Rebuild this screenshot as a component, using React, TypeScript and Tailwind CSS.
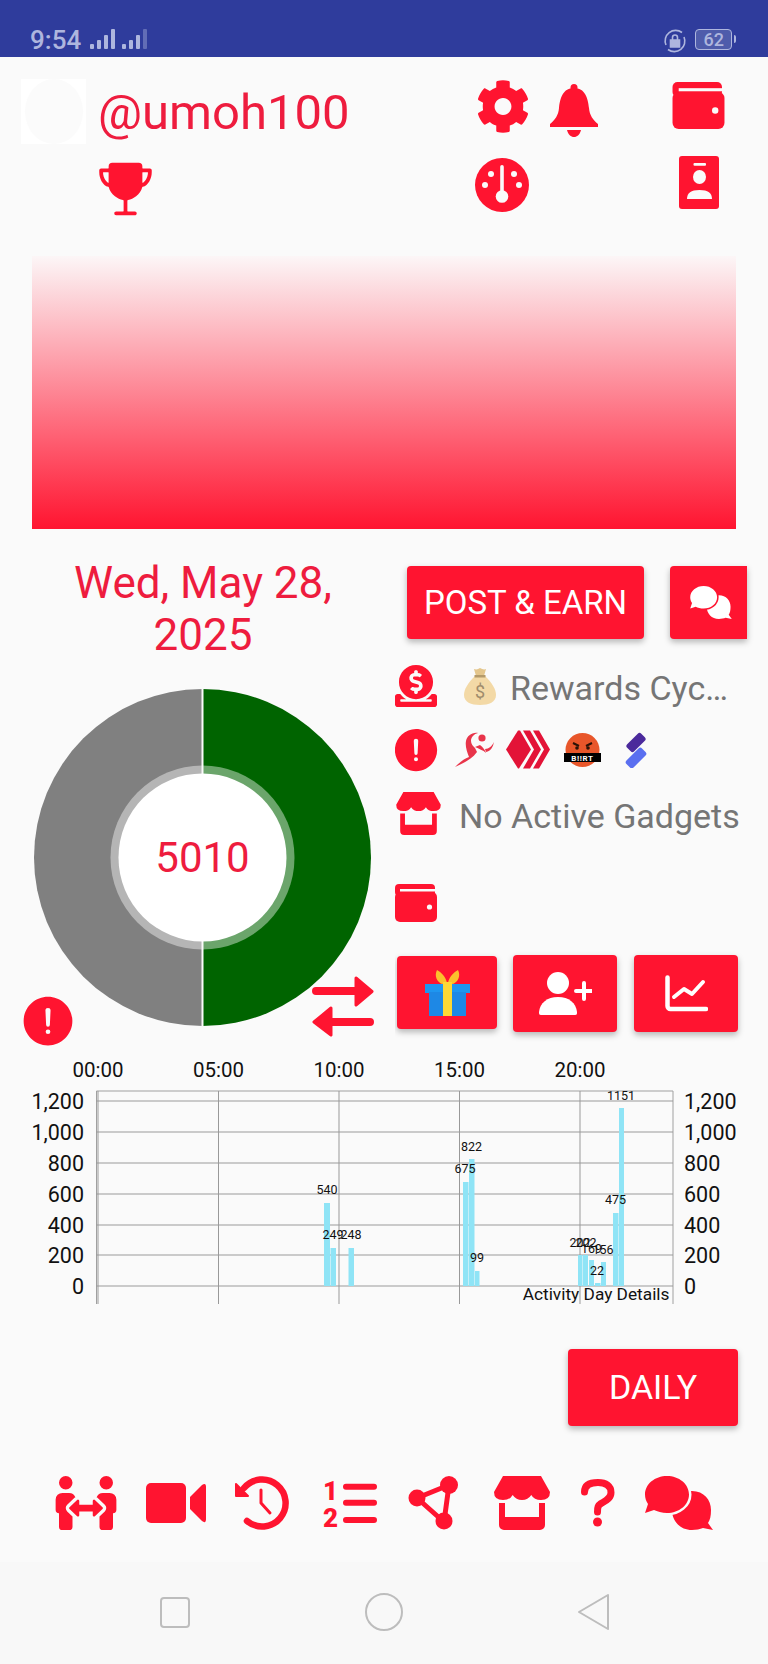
import React from 'react';
import { FaCog, FaDonate, FaPeopleArrows } from 'react-icons/fa';
import { IoAlertCircle, IoTrophy } from 'react-icons/io5';

const gridY = [
  { label: '1,200', y: 51 },
  { label: '1,000', y: 82 },
  { label: '800', y: 113 },
  { label: '600', y: 144 },
  { label: '400', y: 175 },
  { label: '200', y: 205 },
  { label: '0', y: 236 },
];

const gridX = [
  { label: '00:00', x: 98 },
  { label: '05:00', x: 218.5 },
  { label: '10:00', x: 339 },
  { label: '15:00', x: 459.5 },
  { label: '20:00', x: 580 },
];

const bars = [
  { x: 324, w: 6, top: 1203 },
  { x: 330.5, w: 5.5, top: 1248 },
  { x: 348.5, w: 5.5, top: 1248 },
  { x: 463, w: 5.5, top: 1182 },
  { x: 469, w: 5.5, top: 1159 },
  { x: 475, w: 4.5, top: 1271 },
  { x: 578, w: 4.5, top: 1255 },
  { x: 583, w: 5, top: 1255 },
  { x: 589, w: 5, top: 1260 },
  { x: 595, w: 5.5, top: 1283 },
  { x: 601, w: 5, top: 1262 },
  { x: 613, w: 5.5, top: 1213 },
  { x: 619, w: 5, top: 1108 },
];

const values = [
  { t: '540', x: 327, y: 1189 },
  { t: '249', x: 333, y: 1234 },
  { t: '248', x: 351, y: 1234 },
  { t: '675', x: 465, y: 1168 },
  { t: '822', x: 471.5, y: 1146 },
  { t: '99', x: 477, y: 1257 },
  { t: '202', x: 580, y: 1242 },
  { t: '202', x: 586, y: 1242 },
  { t: '169', x: 591.5, y: 1248 },
  { t: '22', x: 597, y: 1270 },
  { t: '156', x: 603, y: 1249 },
  { t: '475', x: 615.5, y: 1199 },
  { t: '1151', x: 621, y: 1095 },
];

const Bell = ({ className }: { className: string }) => (
  <svg className={className} viewBox="0 0 48 53" fill="currentColor">
    <circle cx="24" cy="3.5" r="3.5" />
    <path d="M24 4C13 4 10 14 9 24c-.5 7-4 12-9 16v3h48v-3c-5-4-8.5-9-9-16C38 14 35 4 24 4z" />
    <path d="M17 46h14c-1 4.5-4 7-7 7s-6-2.5-7-7z" />
  </svg>
);

const Wallet = ({ className }: { className: string }) => (
  <svg className={className} viewBox="0 0 42 38" fill="currentColor">
    <rect x="0" y="0" width="40" height="12" rx="4" />
    <rect x="0" y="8" width="42" height="30" rx="5" />
    <rect x="5" y="5" width="37" height="2.5" fill="#fafafa" />
    <circle cx="34.5" cy="23" r="2.6" fill="#fafafa" />
  </svg>
);

const Gauge = ({ className }: { className: string }) => (
  <svg className={className} viewBox="0 0 54 54">
    <circle cx="27" cy="27" r="27" fill="currentColor" />
    <g fill="#fafafa">
      <rect x="25.2" y="7" width="3.6" height="30" rx="1.8" />
      <circle cx="27" cy="38.5" r="6.3" />
      <circle cx="10" cy="27" r="3" />
      <circle cx="44" cy="27" r="3" />
      <circle cx="16" cy="16" r="3" />
      <circle cx="39" cy="16" r="3" />
    </g>
  </svg>
);

const IdCard = ({ className }: { className: string }) => (
  <svg className={className} viewBox="0 0 40 53">
    <rect x="0" y="0" width="40" height="53" rx="3" fill="currentColor" />
    <g fill="#fafafa">
      <rect x="14.5" y="7" width="12.5" height="2.8" rx="1" />
      <ellipse cx="20.5" cy="21" rx="6.5" ry="7" />
      <path d="M8 43c0-6 4-9 12.5-9S33 37 33 43z" />
    </g>
  </svg>
);

const Chats = ({ className, fill, gap }: { className: string; fill: string; gap: string }) => (
  <svg className={className} viewBox="0 0 68 54" fill={fill}>
    <path d="M47 15c12 0 19 9 19 19 0 6-1 10-3 13l5 7-10-2c-3 1-7 2-11 2-12 0-20-9-20-20s8-19 20-19z" />
    <path
      d="M22 0c12 0 22 8 22 18.5S34 37 22 37c-5 0-10-1.5-13-3l-9 3 3-9c-2-3-3-6-3-9.5C0 8 10 0 22 0z"
      stroke={gap}
      strokeWidth="5"
      paintOrder="stroke"
    />
  </svg>
);

const PersonAdd = ({ className }: { className: string }) => (
  <svg className={className} viewBox="0 0 53 43" fill="currentColor">
    <circle cx="19" cy="11" r="11" />
    <path d="M2 43c-2 0-2-1-2-3 1-9 8-15 19-15s18 6 19 15c0 2 0 3-2 3z" />
    <path d="M45 11v16M37 19h16" stroke="currentColor" strokeWidth="4" strokeLinecap="round" />
  </svg>
);

const ChartLine = ({ className }: { className: string }) => (
  <svg className={className} viewBox="0 0 43 37" fill="none" stroke="currentColor" strokeWidth="4.5" strokeLinecap="round" strokeLinejoin="round">
    <path d="M2.5 2.5V31a3 3 0 0 0 3 3H41" />
    <path d="M9 22l10-8 8 5 11-12" strokeWidth="4" />
  </svg>
);

const Store = ({ className }: { className: string }) => (
  <svg className={className} viewBox="0 0 56 54" fill="currentColor">
    <path d="M9 0h38l9 16q0 8-9 8-7 0-9.7-5-3.3 5-9.3 5t-9.3-5q-2.7 5-9.7 5-9 0-9-8z" />
    <path d="M5 27h6v14h34V27h6v22a5 5 0 0 1-5 5H10a5 5 0 0 1-5-5z" />
  </svg>
);

const Video = ({ className }: { className: string }) => (
  <svg className={className} viewBox="0 0 60 40" fill="currentColor">
    <rect x="0" y="0" width="40" height="40" rx="5" />
    <path d="M44 14 56 2q4-3 4 2v32q0 5-4 2L44 26z" />
  </svg>
);

const History = ({ className }: { className: string }) => (
  <svg className={className} viewBox="0 0 54 54" fill="none" stroke="currentColor" strokeLinecap="round" strokeLinejoin="round">
    <path d="M9 12A23.5 23.5 0 1 1 12 45" strokeWidth="6.5" />
    <path d="M1 8v12h12z" fill="currentColor" strokeWidth="2" />
    <path d="M26 14v13l9 10" strokeWidth="3" />
  </svg>
);

const NumberedList = ({ className }: { className: string }) => (
  <svg className={className} viewBox="0 0 54 47" fill="currentColor">
    <text x="7.5" y="20" textAnchor="middle" fontSize="26" fontWeight="900">1</text>
    <text x="7.5" y="47" textAnchor="middle" fontSize="26" fontWeight="900">2</text>
    <path d="M23 6.7h28M23 22.7h28M23 40h28" stroke="currentColor" strokeWidth="6" strokeLinecap="round" />
  </svg>
);

const ShareTriangle = ({ className }: { className: string }) => (
  <svg className={className} viewBox="0 0 51 54" fill="none" stroke="currentColor" strokeWidth="5" strokeLinejoin="round">
    <path d="M41 9 9 22l27 24z" />
    <circle cx="41" cy="9" r="9" fill="currentColor" stroke="none" />
    <circle cx="9" cy="22" r="8.5" fill="currentColor" stroke="none" />
    <circle cx="36" cy="45" r="8.5" fill="currentColor" stroke="none" />
  </svg>
);

const Question = ({ className }: { className: string }) => (
  <svg className={className} viewBox="0 0 34 48" fill="none" stroke="currentColor" strokeWidth="7" strokeLinecap="round">
    <path d="M3.5 13c0-7 5.5-9.5 13.5-9.5S30 7 30 13.5 24 22 20 24.5c-3 2-3.5 3.5-3.5 8.5" />
    <circle cx="16.5" cy="43" r="4.5" fill="currentColor" stroke="none" />
  </svg>
);

const SwapArrows = ({ className }: { className: string }) => (
  <svg className={className} viewBox="0 0 62 61" fill="currentColor" stroke="currentColor" strokeLinecap="round" strokeLinejoin="round">
    <path d="M4 15h42M58 46H18" strokeWidth="8" />
    <path d="M44 2 60 15.5 44 29zM19 32 2 46l17 13z" strokeWidth="3" />
  </svg>
);

const StatusBar = () => (
  <div className="flex h-[57px] shrink-0 items-start bg-[#2f3c9c] pl-[30px] pt-[26px] text-[#aeb6de]">
    <span className="text-[26px] font-medium leading-[29px]">9:54</span>
    <svg className="ml-[9px] mt-[3px] h-[21px] w-[58px]" viewBox="0 0 58 21" fill="currentColor">
      <rect x="0" y="15" width="4" height="5" rx="1" />
      <rect x="7" y="11" width="4" height="9" rx="1" />
      <rect x="14" y="6" width="4" height="14" rx="1" />
      <rect x="21" y="0" width="4" height="20" rx="1" />
      <rect x="32" y="15" width="4" height="5" rx="1" />
      <rect x="39" y="11" width="4" height="9" rx="1" />
      <rect x="46" y="6" width="4" height="14" rx="1" />
      <rect x="53" y="0" width="4" height="20" rx="1" opacity="0.4" />
    </svg>
    <svg className="ml-[515px] mt-[3px] h-[24px] w-[24px]" viewBox="0 0 24 24" fill="none" stroke="currentColor" strokeWidth="1.6">
      <path d="M3 16A10.5 10.5 0 0 1 19 3.5M21 8A10.5 10.5 0 0 1 5 20.5" />
      <path d="M7.5 11h9v7h-9z" fill="currentColor" />
      <path d="M9.5 11V8.5a2.5 2.5 0 0 1 5 0V11" />
    </svg>
    <div className="ml-[8px] mt-[3px] flex h-[21px] w-[37px] items-center justify-center rounded-[4px] border-[1.5px] border-[#aeb6de] bg-[#4f5cab] text-[18px] font-medium leading-none">
      62
    </div>
    <div className="ml-[2px] mt-[9px] h-[8px] w-[2px] rounded-r-sm bg-[#aeb6de]" />
  </div>
);

const Header = () => (
  <div className="grid h-[199px] shrink-0 grid-cols-[79px_378px_72px_122px_60px] grid-rows-[77px_60px] pl-[21px] pt-[22px] text-[#ff1430]">
    <div className="flex h-[65px] w-[65px] items-center justify-center bg-white">
      <div className="h-[65px] w-[58px] rounded-[50%] bg-[#fbfbfb]" />
    </div>
    <div className="-ml-[2px] mt-[6px] text-[49px] leading-[56px] text-[#ee1c3e]">@umoh100</div>
    <FaCog className="-ml-[2px] h-[55px] w-[54px]" />
    <Bell className="mt-[5px] h-[53px] w-[48px]" />
    <Wallet className="mt-[3px] h-[47px] w-[53px]" />
    <div />
    <IoTrophy className="-ml-[8px] mt-[3px] h-[60px] w-[67px]" />
    <Gauge className="-ml-[3px] mt-[2px] h-[54px] w-[54px]" />
    <div />
    <IdCard className="ml-[7px] h-[53px] w-[40px]" />
  </div>
);

const Donut = () => (
  <div className="relative ml-[34px] mt-[28px] h-[337px] w-[337px]">
    <svg className="h-[337px] w-[337px]" viewBox="0 0 337 337">
      <path d="M168.5 0a168.5 168.5 0 0 1 0 337z" fill="#006400" />
      <path d="M168.5 0a168.5 168.5 0 0 0 0 337z" fill="#808080" />
      <circle cx="168.5" cy="168.5" r="92" fill="#ffffff" fillOpacity="0.42" />
      <rect x="167.5" y="0" width="2" height="337" fill="#fafafa" />
      <circle cx="168.5" cy="168.5" r="84" fill="#ffffff" />
    </svg>
    <div className="absolute inset-0 flex items-center justify-center text-[42px] text-[#ee1c3e]">5010</div>
  </div>
);

const MoneyBag = () => (
  <svg className="h-[38px] w-[32px]" viewBox="0 0 32 38">
    <path d="M11 9C4 16 0 22 0 28c0 7 7 10 16 10s16-3 16-10c0-6-4-12-11-19z" fill="#f3d9a6" />
    <path d="M10 2c3 1 4 0 6-1 2 1 4 2 6 1l-2 7h-8z" fill="#e4c68c" />
    <rect x="10.5" y="8" width="11" height="2.5" fill="#b49a6a" />
    <text x="16" y="31" textAnchor="middle" fontSize="18" fill="#a08c6c">$</text>
  </svg>
);

const Runner = () => (
  <svg className="h-[35px] w-[41px]" viewBox="0 0 41 35" fill="#e8344a">
    <circle cx="28" cy="6" r="3.6" />
    <path d="M1 35c5-5 9-8 14-10-2-5-4-11-3-16 1-5 6-9 12-8-4 1-7 4-7 8 0 3 2 5 4 7l2 4c-5 7-13 11-22 15z" />
    <path d="M21 15c4 2 8 3 11 6-1-3-3-6-6-8z" />
    <path d="M31 17c4 0 7-3 9-7-1 5-3 9-8 10z" />
  </svg>
);

const Hive = () => (
  <svg className="h-[39px] w-[44px]" viewBox="0 0 44 38" fill="#e31337">
    <polygon points="0,19 12,0 14,0 25,19 13,38 12,38" />
    <polygon points="17,0 24,0 35,19 24,38 17,38 28,19" />
    <polygon points="27,0 33,0 44,19 33,38 27,38 38,19" />
  </svg>
);

const Blurt = () => (
  <svg className="h-[34px] w-[37px]" viewBox="0 0 37 34">
    <circle cx="18.5" cy="17" r="17" fill="#e8562a" />
    <path d="M9 10l6 3M28 10l-6 3" stroke="#2b1206" strokeWidth="2" />
    <circle cx="13" cy="15" r="1.8" fill="#2b1206" />
    <circle cx="24" cy="15" r="1.8" fill="#2b1206" />
    <rect x="0" y="20" width="37" height="9" fill="#000000" />
    <text x="18.5" y="27.5" textAnchor="middle" fontSize="8" fontWeight="700" letterSpacing="0.6" fill="#ffffff">B!!RT</text>
  </svg>
);

const Splinter = () => (
  <svg className="h-[36px] w-[22px]" viewBox="0 0 22 36">
    <rect x="1" y="5.5" width="20" height="10" rx="2.5" transform="rotate(-45 11 10.5)" fill="#4b2a9c" />
    <rect x="0" y="21" width="22" height="10" rx="2.5" transform="rotate(-45 11 26)" fill="#5a6ff0" />
  </svg>
);

const Gift = () => (
  <svg className="h-[46px] w-[45px]" viewBox="0 0 45 46">
    <path d="M17 14C12 12 9 6 12 0c4 2 9 7 10 13zM28 14c5-2 8-8 5-14-4 2-9 7-10 13z" fill="#fbc02d" />
    <rect x="0" y="14" width="45" height="9" fill="#1e96f0" />
    <rect x="4" y="22" width="37" height="24" fill="#1e88e5" />
    <rect x="18" y="12" width="9" height="34" fill="#fdd835" />
  </svg>
);

const RedButton = ({ className, children }: { className: string; children: React.ReactNode }) => (
  <div className={`flex items-center justify-center rounded-[4px] bg-[#ff1430] text-white shadow-[0_3px_6px_rgba(0,0,0,0.28)] ${className}`}>
    {children}
  </div>
);

const Actions = () => (
  <div className="relative flex h-[521px] shrink-0">
    <div className="w-[395px] shrink-0">
      <div className="mt-[28px] w-[406px] text-center text-[44px] leading-[52px] text-[#ee1c3e]">
        Wed, May 28,
        <br />
        2025
      </div>
      <Donut />
    </div>
    <div className="flex-1 overflow-hidden text-[#ff1430]">
      <div className="ml-[12px] mt-[37px] flex w-[500px] gap-[26px]">
        <RedButton className="h-[73px] w-[237px] text-[33px]">POST &amp; EARN</RedButton>
        <div className="flex h-[73px] w-[77px] items-center justify-start rounded-l-[4px] bg-[#ff1430] pl-[20px] text-white shadow-[0_3px_6px_rgba(0,0,0,0.28)]">
          <Chats className="h-[33px] w-[42px]" fill="#ffffff" gap="#ff1430" />
        </div>
      </div>
      <div className="mt-[26px] flex h-[42px] items-center">
        <FaDonate className="h-[42px] w-[42px] shrink-0" />
        <span className="ml-[27px]"><MoneyBag /></span>
        <span className="ml-[14px] mt-[4px] whitespace-nowrap text-[34px] leading-none text-[#757575]">Rewards Cyc…</span>
      </div>
      <div className="mt-[21px] flex h-[43px] items-center">
        <IoAlertCircle className="-ml-[5px] h-[52px] w-[52px] shrink-0" />
        <span className="ml-[12px]"><Runner /></span>
        <span className="ml-[11px]"><Hive /></span>
        <span className="ml-[14px]"><Blurt /></span>
        <span className="ml-[24px]"><Splinter /></span>
      </div>
      <div className="mt-[21px] flex h-[43px] items-center">
        <Store className="ml-[1px] h-[43px] w-[45px] shrink-0" />
        <span className="ml-[18px] mt-[4px] whitespace-nowrap text-[34px] leading-none text-[#757575]">No Active Gadgets</span>
      </div>
      <Wallet className="mt-[49px] h-[38px] w-[42px]" />
      <div className="mt-[33px] flex items-start">
        <RedButton className="ml-[2px] mt-[1px] h-[73px] w-[100px]"><Gift /></RedButton>
        <RedButton className="ml-[16px] h-[77px] w-[104px]"><PersonAdd className="h-[43px] w-[53px]" /></RedButton>
        <RedButton className="ml-[17px] h-[77px] w-[104px]"><ChartLine className="h-[37px] w-[43px]" /></RedButton>
      </div>
    </div>
    <IoAlertCircle className="absolute left-[18px] top-[462px] h-[60px] w-[60px] text-[#ff1430]" />
    <SwapArrows className="absolute left-[312px] top-[447px] h-[61px] w-[62px] text-[#ff1430]" />
  </div>
);

const ActivityChart = () => (
  <svg className="h-[260px] w-[768px] shrink-0" viewBox="0 0 768 260" fontFamily="Roboto, sans-serif">
    <path d="M96.5 254V41H673V254" fill="none" stroke="#a0a0a0" strokeWidth="1" />
    {gridY.map((g) => (
      <line key={g.label} x1="96" x2="673" y1={g.y} y2={g.y} stroke="#999999" strokeWidth="1.2" />
    ))}
    {gridX.map((g) => (
      <line key={g.label} x1={g.x} x2={g.x} y1="41" y2="254" stroke="#999999" strokeWidth="1" />
    ))}
    {bars.map((b) => (
      <rect key={b.x} x={b.x} y={b.top - 1050} width={b.w} height={1286 - b.top} fill="#8fe4f6" />
    ))}
    {gridX.map((g) => (
      <text key={g.label} x={g.x} y="27" textAnchor="middle" fontSize="20.5" fill="#111111">{g.label}</text>
    ))}
    {gridY.map((g) => (
      <text key={g.label} x="84" y={g.y + 7.5} textAnchor="end" fontSize="21.5" fill="#111111">{g.label}</text>
    ))}
    {gridY.map((g) => (
      <text key={g.label} x="684" y={g.y + 7.5} fontSize="21.5" fill="#111111">{g.label}</text>
    ))}
    {values.map((v) => (
      <text key={v.t + v.x} x={v.x} y={v.y - 1050 + 4.5} textAnchor="middle" fontSize="12.5" fill="#111111">{v.t}</text>
    ))}
    <text x="669.5" y="250" textAnchor="end" fontSize="17.3" fill="#111111">Activity Day Details</text>
  </svg>
);

const BottomIcons = () => (
  <div className="mt-[50px] flex h-[54px] shrink-0 items-center pl-[55px] text-[#ff1430]">
    <FaPeopleArrows className="h-[54px] w-[62px]" />
    <Video className="ml-[29px] h-[40px] w-[60px]" />
    <History className="ml-[29px] h-[54px] w-[54px]" />
    <NumberedList className="ml-[33.5px] h-[47px] w-[54px] overflow-visible" />
    <ShareTriangle className="ml-[31.5px] h-[54px] w-[51px]" />
    <Store className="ml-[35px] h-[54px] w-[56px]" />
    <Question className="ml-[31px] h-[48px] w-[34px]" />
    <Chats className="ml-[30px] h-[54px] w-[68px]" fill="#ff1430" gap="#fafafa" />
  </div>
);

const NavBar = () => (
  <div className="mt-[32px] flex flex-1 items-center bg-[#f8f8f8] pb-[2px] pl-[160px] text-[#bdbdbd]">
    <div className="h-[31px] w-[30px] rounded-[4px] border-[2px] border-[#bdbdbd]" />
    <div className="ml-[175px] h-[38px] w-[38px] rounded-full border-[2px] border-[#bdbdbd]" />
    <svg className="ml-[174px] h-[38px] w-[33px]" viewBox="0 0 33 38" fill="none" stroke="currentColor" strokeWidth="2" strokeLinejoin="round">
      <path d="M31 2 2 19l29 17z" />
    </svg>
  </div>
);

export default function App() {
  return (
    <div className="flex h-[1664px] w-[768px] flex-col overflow-hidden bg-[#fafafa] font-['Roboto',sans-serif]">
      <StatusBar />
      <Header />
      <div className="mx-[32px] h-[273px] shrink-0 bg-linear-to-b/srgb from-[#fcf6f7] to-[#ff1430]" />
      <Actions />
      <ActivityChart />
      <div className="mt-[39px] flex shrink-0 justify-end pr-[30px]">
        <RedButton className="h-[77px] w-[170px] text-[34px]">DAILY</RedButton>
      </div>
      <BottomIcons />
      <NavBar />
    </div>
  );
}
